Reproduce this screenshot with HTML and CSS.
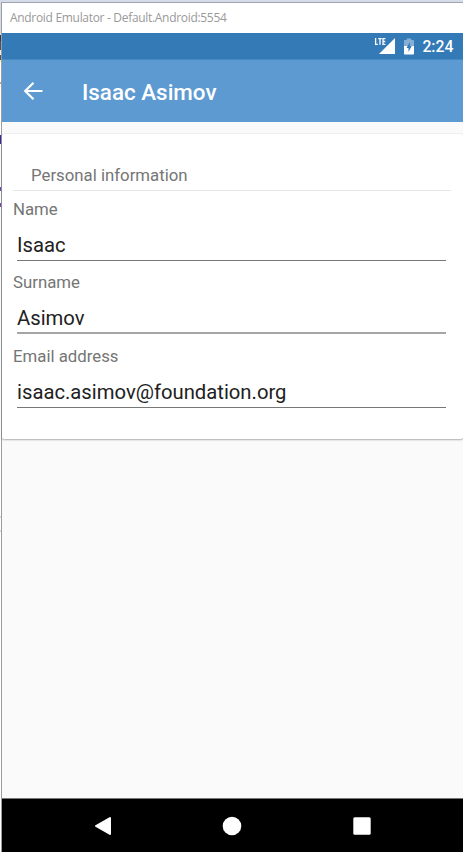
FILE: index.html
```html
<!DOCTYPE html>
<html lang="en">
<head>
<meta charset="utf-8">
<title>Android Emulator</title>
<link rel="stylesheet" href="styles.css">
</head>
<body>
<div class="window">
  <div class="titlebar"><span>Android Emulator - Default.Android:5554</span></div>
  <div class="status">
    <svg class="signal" width="22" height="18" viewBox="0 0 22 18">
      <path d="M21 1v16H5z" fill="#fff"/>
      <path d="M0 0h12v9H0z" fill="#337ab7"/>
      <path d="M1.600 1v6.300h2.300M4.300 1.700h3.400M6 1.700v6M11.400 1.700H9v5.600h2.400M9 4.500h2.200" fill="none" stroke="#fff" stroke-width="1.300"/>
    </svg>
    <svg class="battery" width="12" height="17" viewBox="0 0 12 17">
      <path d="M1.700 2h2V.5h4.600V2h2q.7 0 .7.8V8H1V2.800q0-.8.7-.8z" fill="#85afd4"/>
      <path d="M1 8h10v7.700q0 .8-.8.8H1.800q-.8 0-.8-.8z" fill="#fff"/>
      <path d="M6.800 4 3.500 10h2v4L8.700 8H6.800z" fill="#337ab7"/>
    </svg>
    <span class="clock">2:24</span>
  </div>
  <header class="toolbar">
    <svg class="back" width="20" height="20" viewBox="0 0 20 20"><path d="M19.500 10H2.200M10.500 1.700 2.200 10l8.300 8.300" fill="none" stroke="#fff" stroke-width="2.200"/></svg>
    <h1>Isaac Asimov</h1>
  </header>
  <main>
    <section class="card">
      <h2><span>Personal information</span></h2>
      <div class="field"><label>Name</label><div class="value">Isaac</div></div>
      <div class="field"><label>Surname</label><div class="value soft">Asimov</div></div>
      <div class="field"><label>Email address</label><div class="value">isaac.asimov@foundation.org</div></div>
    </section>
  </main>
  <nav>
    <svg width="18" height="20" viewBox="0 0 18 20"><path d="M16 2v16L2 10z" fill="#fff" stroke="#fff" stroke-width="2" stroke-linejoin="round"/></svg>
    <svg width="20" height="20" viewBox="0 0 20 20"><circle cx="10" cy="10" r="9.300" fill="#fff"/></svg>
    <svg width="18" height="18" viewBox="0 0 18 18"><rect x=".3" y=".3" width="17.400" height="17.400" rx="1.500" fill="#fff"/></svg>
  </nav>
</div>
</body>
</html>
```
FILE: styles.css
```css
* { box-sizing: border-box; }
body {
  margin: 0;
  height: 852px;
  padding: 2px 0 0 1px;
  overflow: hidden;
  font-family: Roboto, sans-serif;
  background:
    linear-gradient(#4425a0, #4425a0) 0 135px / 1px 9px no-repeat,
    linear-gradient(#7444bd, #7444bd) 0 187px / 1px 4px no-repeat,
    linear-gradient(#7444bd, #7444bd) 0 203px / 1px 4px no-repeat,
    linear-gradient(#aaa, #aaa) 0 82px / 1px 2px no-repeat,
    linear-gradient(#ddd, #ddd) 0 516px / 1px 2px no-repeat,
    linear-gradient(#ddd, #ddd) 0 530px / 1px 2px no-repeat,
    linear-gradient(#d6dbe9 0 35px, #2b3957 35px 41px, #44536f 41px 50px, #eee 50px 55px, #44536f 55px 60px, #fff29d 60px 62px, #fff 62px);
}
.window {
  height: 850px;
  display: flex;
  flex-direction: column;
  border-top: 1px solid #a0a4ac;
  border-left: 1px solid #9b9da1;
  background: #fafafa;
}
.titlebar {
  flex: 0 0 30px;
  padding-left: 8px;
  background: #fff;
  color: #999;
  font: 12px/30px "Open Sans", sans-serif;
  letter-spacing: -.31px;
  white-space: nowrap;
}
.status {
  flex: 0 0 27px;
  display: flex;
  justify-content: flex-end;
  align-items: center;
  padding-right: 9.500px;
  background: #337ab7;
  border-bottom: 1px solid #4488c4;
  color: #fff;
}
.signal { margin-right: 7px; }
.battery { margin-right: 7px; }
.clock { padding-top: 1px; font: 500 15.800px/25px Roboto, sans-serif; }
.toolbar {
  flex: 0 0 62px;
  display: flex;
  align-items: center;
  padding-left: 21px;
  background: #5d9ad1;
  color: #fff;
}
.back { margin-bottom: 1px; }
h1 { margin: 1px 0 0 39px; font-size: 22.400px; line-height: 28px; font-weight: 500; }
main { flex: 1; padding-top: 12px; }
.card {
  height: 305px;
  padding: 30px 12px 0 11px;
  border-radius: 2px;
  background: #fff;
  box-shadow: 0 1px 2px rgba(0, 0, 0, .28), 0 0 2px rgba(0, 0, 0, .12);
}
h2 {
  height: 27px;
  margin: 0;
  padding-left: 18px;
  border-bottom: 1px solid #e6e6e6;
  color: #757575;
  font-size: 16.800px;
  line-height: 22px;
  font-weight: 400;
}
.field { height: 73.400px; padding-top: 7px; }
label { display: block; height: 22px; line-height: 22px; font-size: 16.800px; color: #757575; }
.value {
  height: 41px;
  margin: 0 5px 0 4px;
  padding-top: 12px;
  border-bottom: 1px solid #777;
  color: #212121;
  font-size: 20.250px;
  line-height: 26px;
}
.soft { border-bottom: 2px solid #a6a6a6; }
nav {
  flex: 0 0 54px;
  display: flex;
  align-items: center;
  padding-left: 92px;
  border-top: 1px solid #777;
  background: #000;
}
nav svg { flex-shrink: 0; margin-right: 110px; }
nav svg:nth-child(2) { margin-right: 111px; }
```
